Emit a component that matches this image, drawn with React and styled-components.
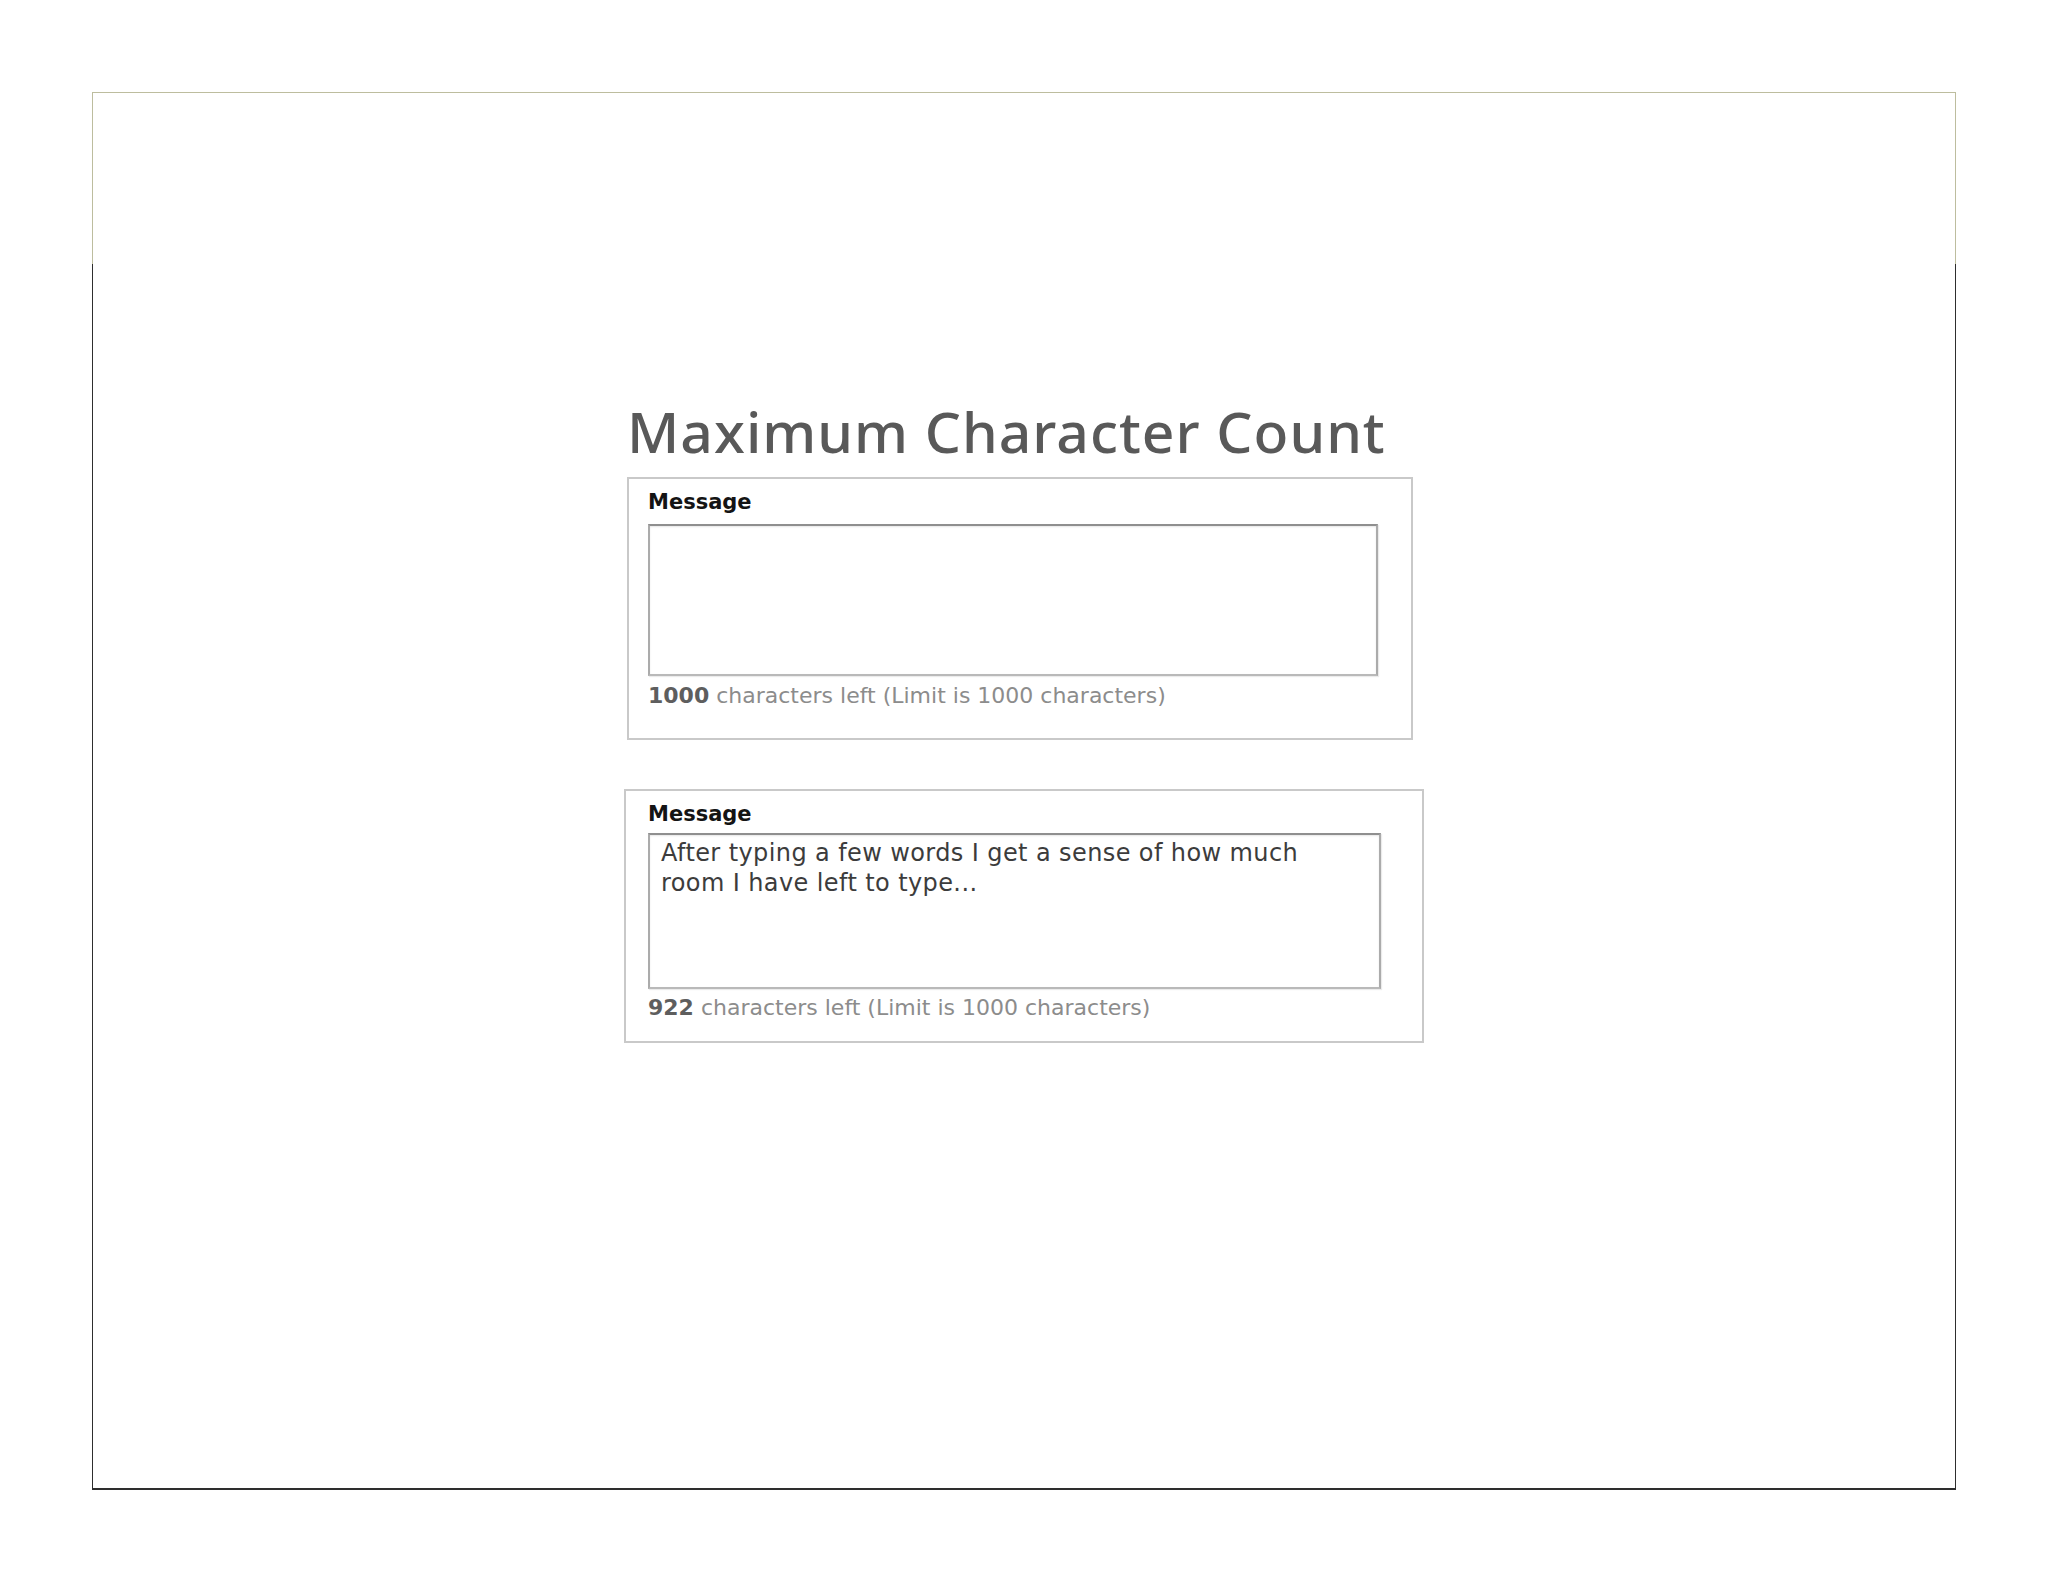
import React from 'react';
import styled, { createGlobalStyle } from 'styled-components';

const GlobalStyle = createGlobalStyle`
  *, *::before, *::after {
    box-sizing: border-box;
  }
  html, body {
    margin: 0;
    padding: 0;
    background: #ffffff;
  }
  body {
    font-family: "DejaVu Sans", Verdana, sans-serif;
  }
`;

const Page = styled.div`
  padding: 92px 0 0 92px;
`;

const Slide = styled.div`
  display: flex;
  flex-direction: column;
  width: 1864px;
`;

const SlideHeader = styled.div`
  height: 172px;
  border: 1px solid #bdbd9e;
  border-bottom: none;
`;

const SlideBody = styled.div`
  height: 1226px;
  border: 1px solid #2e2e2e;
  border-top: none;
  border-bottom-width: 2px;
  padding: 134px 0 0 534px;
  display: flex;
  flex-direction: column;
  align-items: flex-start;
`;

const Title = styled.h1`
  margin: 0 0 13px;
  font-family: "Noto Sans", "Open Sans", sans-serif;
  font-weight: 500;
  font-size: 57px;
  line-height: 66px;
  letter-spacing: 1px;
  color: #595959;
`;

const Panel = styled.div`
  width: ${(p) => p.$width}px;
  height: ${(p) => p.$height}px;
  margin-left: ${(p) => p.$shift || 0}px;
  margin-bottom: 49px;
  border: 2px solid #c9c9c9;
  padding: ${(p) => p.$top}px 0 0 ${(p) => p.$inset}px;
  display: flex;
  flex-direction: column;
  align-items: flex-start;
`;

const Label = styled.div`
  font-family: "DejaVu Sans", Verdana, sans-serif;
  font-weight: 700;
  font-size: 21px;
  line-height: 24px;
  color: #141414;
`;

const Field = styled.div`
  width: ${(p) => p.$width}px;
  height: ${(p) => p.$height}px;
  margin-top: ${(p) => p.$gap}px;
  border: 2px solid #ababab;
  border-top-color: #8f8f8f;
  border-bottom-color: #b9b9b9;
  padding: 3px 11px;
  background: #ffffff;
  box-shadow: inset 0 1px 2px rgba(0, 0, 0, 0.1), 1px 1px 1px rgba(0, 0, 0, 0.08);
`;

const FieldLine = styled.div`
  font-family: "DejaVu Sans", Verdana, sans-serif;
  font-size: 24px;
  line-height: 30px;
  letter-spacing: 0.4px;
  color: #3c3c3c;
  white-space: nowrap;
`;

const Counter = styled.div`
  margin-top: ${(p) => p.$gap}px;
  font-family: "DejaVu Sans", Verdana, sans-serif;
  font-size: 22px;
  line-height: 26px;
  color: #8c8c8c;
  white-space: nowrap;
`;

const Count = styled.span`
  font-weight: 700;
  color: #5e5e5e;
`;

function MessageBox({ width, height, top, inset, shift, fieldWidth, fieldHeight, fieldGap, counterGap, lines, left }) {
  return (
    <Panel $width={width} $height={height} $top={top} $inset={inset} $shift={shift}>
      <Label>Message</Label>
      <Field $width={fieldWidth} $height={fieldHeight} $gap={fieldGap}>
        {lines.map((line) => (
          <FieldLine key={line}>{line}</FieldLine>
        ))}
      </Field>
      <Counter $gap={counterGap}>
        <Count>{left}</Count> characters left (Limit is 1000 characters)
      </Counter>
    </Panel>
  );
}

export default function App() {
  return (
    <>
      <GlobalStyle />
      <Page>
        <Slide>
          <SlideHeader />
          <SlideBody>
            <Title>Maximum Character Count</Title>
            <MessageBox
              width={786}
              height={263}
              top={11}
              inset={19}
              shift={0}
              fieldWidth={730}
              fieldHeight={152}
              fieldGap={10}
              counterGap={7}
              lines={[]}
              left={1000}
            />
            <MessageBox
              width={800}
              height={254}
              top={11}
              inset={22}
              shift={-3}
              fieldWidth={733}
              fieldHeight={156}
              fieldGap={7}
              counterGap={6}
              lines={[
                'After typing a few words I get a sense of how much',
                'room I have left to type...',
              ]}
              left={922}
            />
          </SlideBody>
        </Slide>
      </Page>
    </>
  );
}
